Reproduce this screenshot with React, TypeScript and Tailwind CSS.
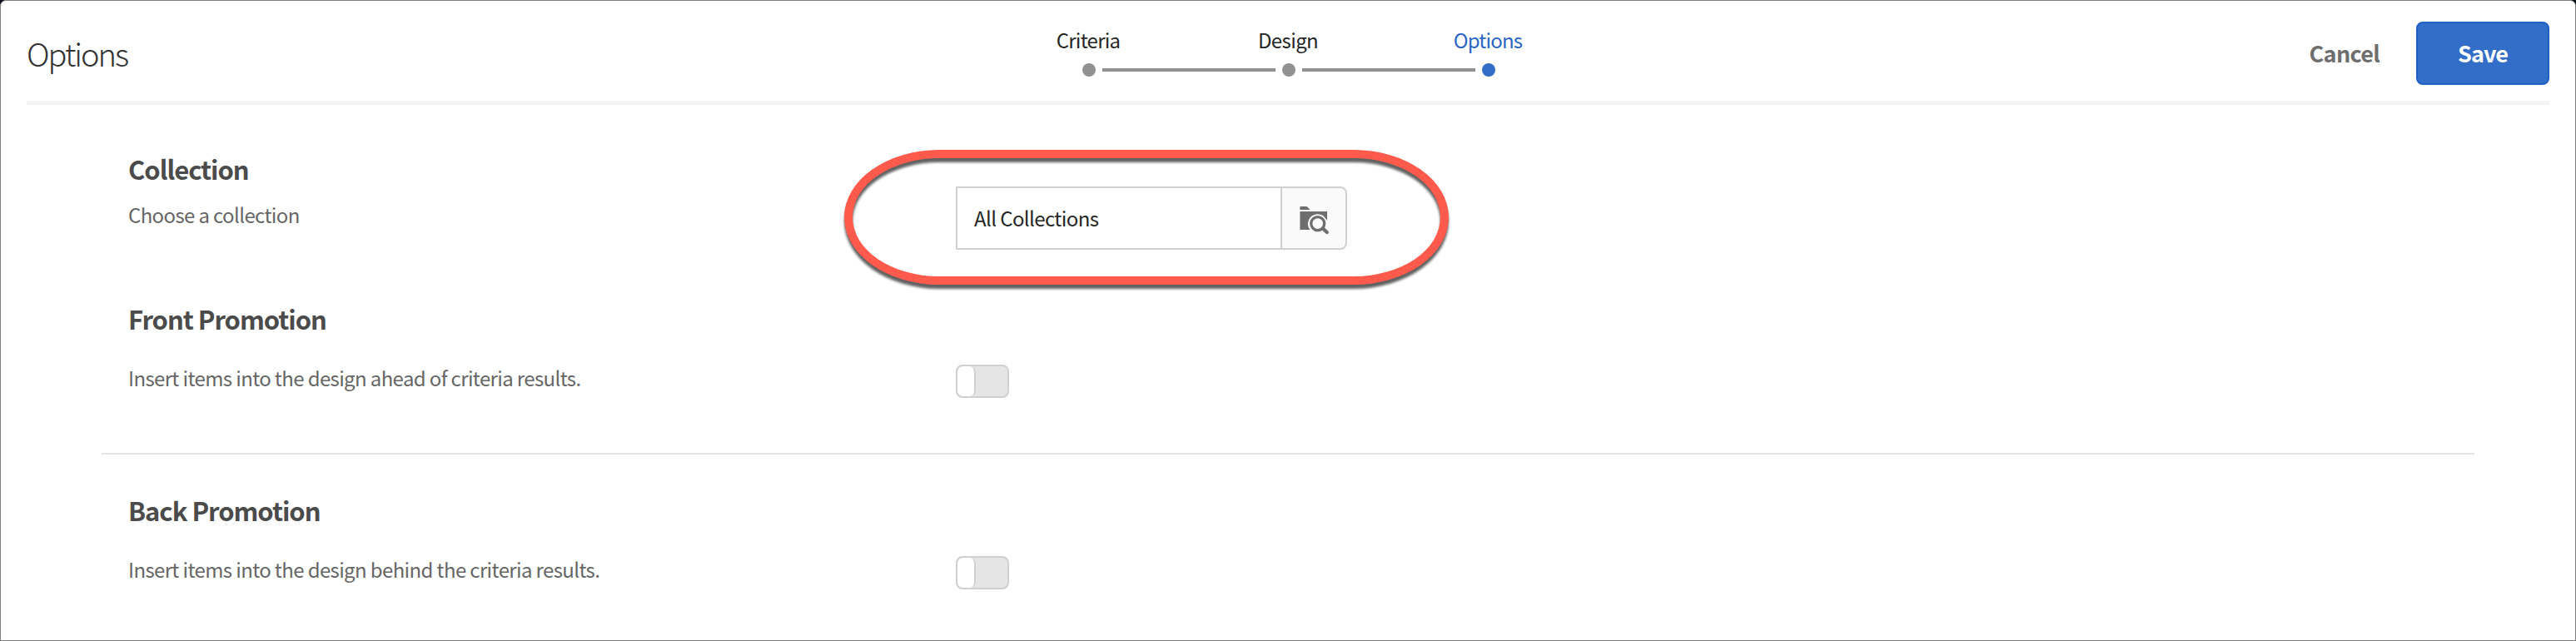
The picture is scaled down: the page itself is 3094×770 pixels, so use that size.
import React from "react";

const steps = [
  { label: "Criteria", active: false, tracking: "tracking-[-0.75px]" },
  { label: "Design", active: false, tracking: "tracking-[-0.6px]" },
  { label: "Options", active: true, tracking: "tracking-[-0.85px]" },
];

function Stepper() {
  return (
    <ol className="flex">
      {steps.map((step, i) => (
        <li key={step.label} className="flex w-[240px] flex-col">
          <span
            className={`pr-[2px] text-center text-[24px] leading-[32px] ${step.tracking} ${
              step.active ? "text-[#2a66c4]" : "text-[#262626]"
            }`}
          >
            {step.label}
          </span>
          <span className="mt-[12px] flex h-[16px] items-center">
            <span className={`h-[4px] w-[104px] ${i > 0 ? "bg-[#919191]" : ""}`} />
            <span className={`mx-[8px] size-[16px] rounded-full ${step.active ? "bg-[#326ec8]" : "bg-[#919191]"}`} />
            <span className={`h-[4px] w-[104px] ${i < steps.length - 1 ? "bg-[#919191]" : ""}`} />
          </span>
        </li>
      ))}
    </ol>
  );
}

function FolderSearchIcon() {
  return (
    <svg width="40" height="40" viewBox="0 0 40 40" fill="none">
      <path d="M3.4 6h8.2l4 4H3.4z" fill="#6e6e6e" />
      <path d="M3.4 12H36v22H3.4z" fill="#6e6e6e" />
      <path d="M24.7 15.2a11.6 11.6 0 0 0-9.2 18.8v2H38V22.6l-3.2-1.4a11.6 11.6 0 0 0-10.1-6z" fill="#fafafa" />
      <path d="M33 18l3 5V14z" fill="#6e6e6e" />
      <circle cx="24.7" cy="26.6" r="8" stroke="#6e6e6e" strokeWidth="3.3" />
      <path d="M30.8 32.4l5 4.6" stroke="#6e6e6e" strokeWidth="4.2" strokeLinecap="round" />
    </svg>
  );
}

function Toggle() {
  return (
    <button
      role="switch"
      aria-checked="false"
      className="block h-[40px] w-[64px] overflow-hidden rounded-[8px] border-2 border-[#d0d0d0] bg-[#e5e5e5]"
    >
      <span className="block h-full w-[22px] rounded-[7px] border-r-2 border-[#d0d0d0] bg-white" />
    </button>
  );
}

function Heading({ children }: { children: React.ReactNode }) {
  return <h2 className="text-[31px] leading-[40px] font-bold tracking-[-1.03px] text-[#4b4b4b]">{children}</h2>;
}

function Description({ children }: { children: React.ReactNode }) {
  return <p className="text-[24px] leading-[32px] tracking-[-0.63px] text-[#666666]">{children}</p>;
}

export default function App() {
  return (
    <div className="h-[770px] w-full bg-[#0a0f1c] font-['Noto_Sans_CJK_JP',sans-serif]">
      <div className="flex h-full flex-col rounded-t-[7px] border border-[#7f7f7f] bg-white">
        <header className="mx-[31px] grid h-[125px] grid-cols-[1fr_720px_1fr] border-b-[5px] border-[#f4f4f4]">
          <h1 className="pt-[39px] text-[38px] leading-[48px] font-light tracking-[-2.05px] text-[#323232]">Options</h1>
          <div className="pt-[31px] pl-[1px]">
            <Stepper />
          </div>
          <div className="flex items-start justify-end pt-[25px]">
            <button className="h-[76px] px-[44px] text-[27px] leading-[72px] font-bold tracking-[-0.7px] text-[#6e6e6e]">
              Cancel
            </button>
            <button className="h-[76px] w-[160px] rounded-[8px] border-2 border-[#1f60c3] bg-[#326ec8] text-[27px] leading-[72px] font-bold tracking-[-1px] text-white">
              Save
            </button>
          </div>
        </header>

        <main className="px-[121px]">
          <section className="grid h-[190px] grid-cols-[994px_auto] items-start pl-[32px]">
            <div className="flex flex-col gap-[19px] pt-[57px]">
              <Heading>Collection</Heading>
              <Description>Choose a collection</Description>
            </div>
            <div className="relative mt-[98px] flex w-[470px]">
              <div className="h-[76px] w-[390px] border-2 border-r-0 border-[#d0d0d0] pl-[20px] text-[24px] leading-[72px] tracking-[-0.6px] text-[#262626]">
                All Collections
              </div>
              <button className="flex h-[76px] w-[80px] items-center justify-center rounded-r-[8px] border-2 border-[#d0d0d0] bg-[#fafafa]">
                <FolderSearchIcon />
              </button>
              <div className="pointer-events-none absolute -top-[44px] -left-[134px] h-[162px] w-[726px] rounded-[114px/81px] border-[10px] border-[#ff5a4c] [filter:drop-shadow(0_5px_1.5px_rgba(0,0,0,0.62))]" />
            </div>
          </section>

          <section className="grid h-[230px] grid-cols-[994px_auto] items-start border-b-2 border-[#e4e4e4] pl-[32px]">
            <div className="flex flex-col gap-[35px] pt-[47px]">
              <Heading>Front Promotion</Heading>
              <Description>Insert items into the design ahead of criteria results.</Description>
            </div>
            <div className="pt-[122px]">
              <Toggle />
            </div>
          </section>

          <section className="grid grid-cols-[994px_auto] items-start pl-[32px]">
            <div className="flex flex-col gap-[35px] pt-[47px]">
              <Heading>Back Promotion</Heading>
              <Description>Insert items into the design behind the criteria results.</Description>
            </div>
            <div className="pt-[122px]">
              <Toggle />
            </div>
          </section>
        </main>
      </div>
    </div>
  );
}
